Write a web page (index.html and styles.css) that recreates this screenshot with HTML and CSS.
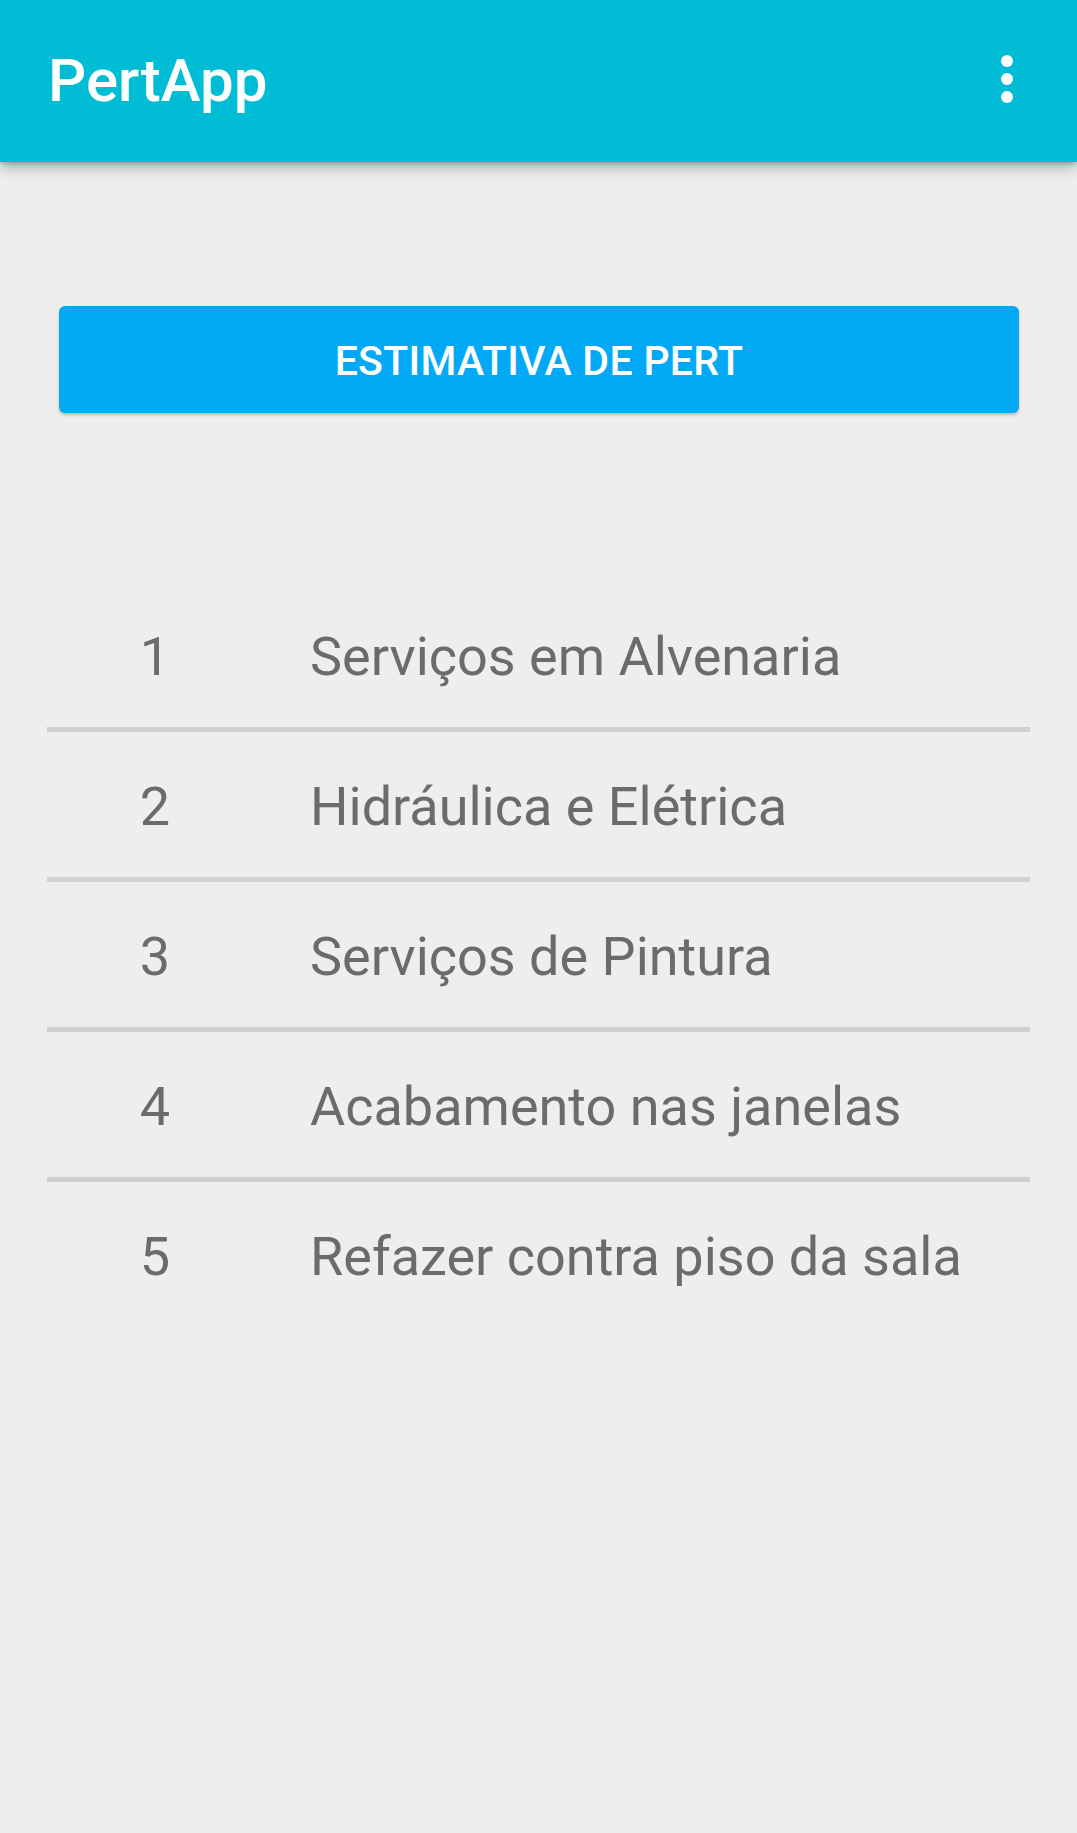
FILE: index.html
```html
<!DOCTYPE html>
<html lang="pt">
<head>
<meta charset="utf-8">
<title>PertApp</title>
<link rel="stylesheet" href="styles.css">
</head>
<body>
<header class="appbar">
  <h1 class="title">PertApp</h1>
  <div class="overflow" aria-label="Mais opções">
    <span class="dot"></span><span class="dot"></span><span class="dot"></span>
  </div>
</header>
<main class="content">
  <button class="pert-btn">ESTIMATIVA DE PERT</button>
  <ul class="list">
    <li class="row"><span class="num">1</span><span class="label">Serviços em Alvenaria</span></li>
    <li class="row"><span class="num">2</span><span class="label">Hidráulica e Elétrica</span></li>
    <li class="row"><span class="num">3</span><span class="label">Serviços de Pintura</span></li>
    <li class="row"><span class="num">4</span><span class="label">Acabamento nas janelas</span></li>
    <li class="row"><span class="num">5</span><span class="label">Refazer contra piso da sala</span></li>
  </ul>
</main>
</body>
</html>
```
FILE: styles.css
```css
* { box-sizing: border-box; }
html, body {
  margin: 0;
  padding: 0;
  background: #eeeeee;
  font-family: Roboto, "Noto Sans", "Liberation Sans", sans-serif;
  height: 100%;
}
.appbar {
  height: 162px;
  background: #00bcd4;
  display: flex;
  align-items: center;
  justify-content: space-between;
  padding: 0 64px 0 48px;
  box-shadow: 0 5px 14px rgba(0,0,0,0.28), 0 2px 4px rgba(0,0,0,0.18);
  position: relative;
  z-index: 1;
}
.title {
  margin: 0;
  color: #ffffff;
  font-size: 60px;
  font-weight: 500;
  line-height: 1;
}
.overflow {
  display: flex;
  flex-direction: column;
  gap: 6px;
  margin-top: -4px;
}
.dot {
  width: 12px;
  height: 12px;
  border-radius: 50%;
  background: #ffffff;
}
.content {
  padding: 144px 0 0;
}
.pert-btn {
  display: block;
  margin: 0 58px 0 59px;
  width: calc(100% - 117px);
  height: 107px;
  padding-top: 4px;
  border: none;
  border-radius: 6px;
  background: #03a9f4;
  color: #ffffff;
  font-family: Roboto, "Noto Sans", "Liberation Sans", sans-serif;
  font-size: 41px;
  font-weight: 500;
  letter-spacing: 0.3px;
  box-shadow: 0 2px 3px rgba(0,0,0,0.22);
}
.list {
  list-style: none;
  margin: 169px 47px 0;
  padding: 0;
}
.row {
  height: 150px;
  display: flex;
  align-items: center;
  border-bottom: 5px solid #d0d0d0;
  color: #6b6b6b;
  font-size: 54px;
  padding-top: 3px;
}
.row:last-child {
  border-bottom: none;
  height: 145px;
}
.num {
  width: 216px;
  text-align: center;
}
.label {
  padding-left: 47px;
}
```
